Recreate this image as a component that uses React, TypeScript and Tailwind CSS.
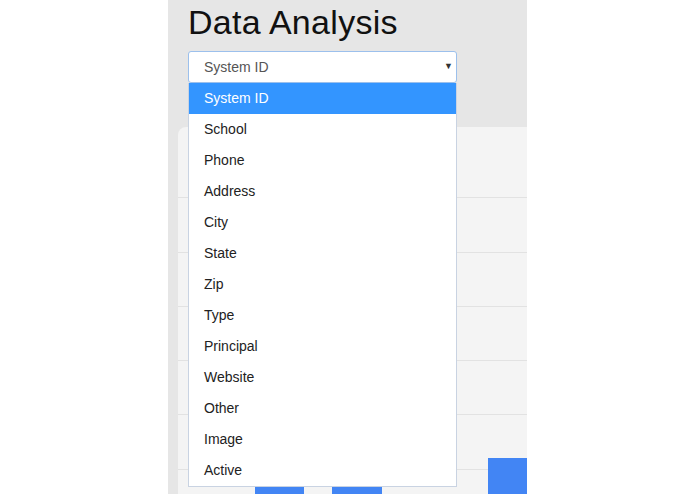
import React from "react";

const options = [
  "System ID",
  "School",
  "Phone",
  "Address",
  "City",
  "State",
  "Zip",
  "Type",
  "Principal",
  "Website",
  "Other",
  "Image",
  "Active",
];

const gridY = [70, 125, 179, 233, 287, 342];

export default function App() {
  return (
    <div
      className="flex h-[494px] w-[695px] overflow-hidden bg-white"
      style={{ fontFamily: '"Liberation Sans", Arial, sans-serif' }}
    >
      <div className="w-[168px] shrink-0" />
      <div className="relative flex w-[359px] shrink-0 flex-col overflow-hidden bg-[#e6e6e6] pl-[10px]">
        <h1 className="ml-[10px] mt-[2px] text-[34px] font-normal leading-[40px] tracking-[0.3px] text-[#111]">
          Data Analysis
        </h1>
        <div className="ml-[10px] mt-[9px] flex h-[32px] w-[269px] items-center justify-between rounded-[3px] border border-[#9cc0ec] bg-white pl-[15px] pr-[3px] text-[14px] text-[#555]">
          <span>System ID</span>
          <span className="text-[9px] text-[#333]">▼</span>
        </div>
        <div className="mt-[44px] flex-1 rounded-tl-[8px] bg-[#f4f4f4]">
          <svg width="360" height="367" className="block">
            {gridY.map((y) => (
              <line key={y} x1="0" x2="360" y1={y + 0.5} y2={y + 0.5} stroke="#e2e2e2" strokeWidth="1" />
            ))}
            <rect x="77" y="350" width="49" height="30" fill="#4285f4" />
            <rect x="154" y="350" width="50" height="30" fill="#4285f4" />
            <rect x="310" y="331" width="60" height="50" fill="#4285f4" />
          </svg>
        </div>
        <div className="absolute left-[20px] top-[83px] w-[269px] border border-t-0 border-[#c9d3e2] bg-white">
          {options.map((o, i) => (
            <div
              key={o}
              className={
                i === 0
                  ? "flex h-[31px] items-center bg-[#3395ff] pl-[15px] text-[14px] text-white"
                  : "flex h-[31px] items-center pl-[15px] text-[14px] text-[#222]"
              }
            >
              {o}
            </div>
          ))}
        </div>
      </div>
    </div>
  );
}
